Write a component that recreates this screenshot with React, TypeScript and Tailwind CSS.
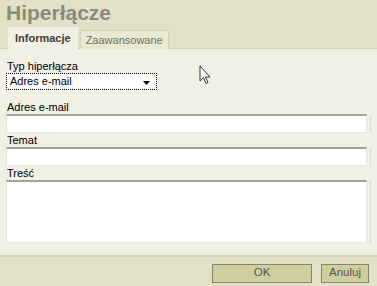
import React from 'react';

const font = { fontFamily: '"Liberation Sans", Arial, sans-serif' };

const Field: React.FC<{ label: string; tall?: boolean }> = ({ label, tall }) => (
  <div className="flex flex-col">
    <label className="text-[11px] leading-[13px] text-black pl-[1px]">{label}</label>
    <div className="flex items-stretch">
      <div
        className={`flex-1 bg-white border-t-[2px] border-t-[#a3a39b] border-x border-b border-x-[#e6e6de] border-b-[#e6e6de] ${
          tall ? 'h-[63px]' : 'h-[19px]'
        }`}
      />
      <div className="w-[3px] ml-[1px] mt-[1px] border-r border-[#d9d9cc]" />
    </div>
  </div>
);

export default function App() {
  return (
    <div className="w-[377px] h-[286px] flex flex-col bg-[#f1f0e4] overflow-hidden relative" style={font}>
      {/* header */}
      <div className="bg-[#e2e1c7] h-[49px] flex flex-col px-[6px] border-b border-[#d2d6a6]">
        <h1 className="text-[21px] leading-[24px] font-bold text-[#8b8b7b] pt-[1px]">Hiperłącze</h1>
        <div className="flex items-end gap-[2px] mt-auto pl-[2px] -mb-[1px]">
          <div className="bg-[#f1f0e4] h-[22px] px-[7px] flex items-center text-[11px] font-bold text-[#3f3f37]">
            Informacje
          </div>
          <div className="bg-[#eae9d3] h-[19px] px-[5px] flex items-center text-[11px] text-[#707062] border border-b-0 border-[#d4d3b4]">
            Zaawansowane
          </div>
        </div>
      </div>

      {/* body */}
      <div className="flex-1 flex flex-col px-[6px] pt-[11px]">
        <label className="text-[11px] leading-[13px] text-black pl-[1px]">Typ hiperłącza</label>
        <div className="w-[151px] h-[17px] bg-white border border-dotted border-black flex items-center">
          <span className="flex-1 text-[11px] leading-[13px] pl-[3px] text-black">Adres e-mail</span>
          <svg width="8" height="4" viewBox="0 0 8 4" className="mr-[5px] mt-[2px]">
            <path d="M0 0h7L3.5 4z" fill="#000" />
          </svg>
        </div>

        <div className="flex flex-col gap-[1px] mt-[11px]">
          <Field label="Adres e-mail" />
          <Field label="Temat" />
          <Field label="Treść" tall />
        </div>
      </div>

      {/* footer */}
      <div className="h-[31px] bg-[#e2e1c6] border-t-[2px] border-[#d6d5b8] flex items-center justify-end gap-[9px] pr-[8px] pt-[3px]">
        <button className="w-[100px] h-[19px] bg-[#d0ce9e] border border-[#85856b] text-[11.5px] text-[#55554a] leading-none">
          OK
        </button>
        <button className="w-[48px] h-[19px] bg-[#d0ce9e] border border-[#85856b] text-[11.5px] text-[#55554a] leading-none">
          Anuluj
        </button>
      </div>

      {/* mouse pointer */}
      <svg className="absolute left-[199px] top-[65px]" width="14" height="20" viewBox="0 0 14 20">
        <path d="M1 1v15l3.5-3.5 2.5 6 2-1-2.5-5.5H11z" fill="#fff" stroke="#333" strokeWidth="1" strokeLinejoin="round" />
      </svg>
    </div>
  );
}
